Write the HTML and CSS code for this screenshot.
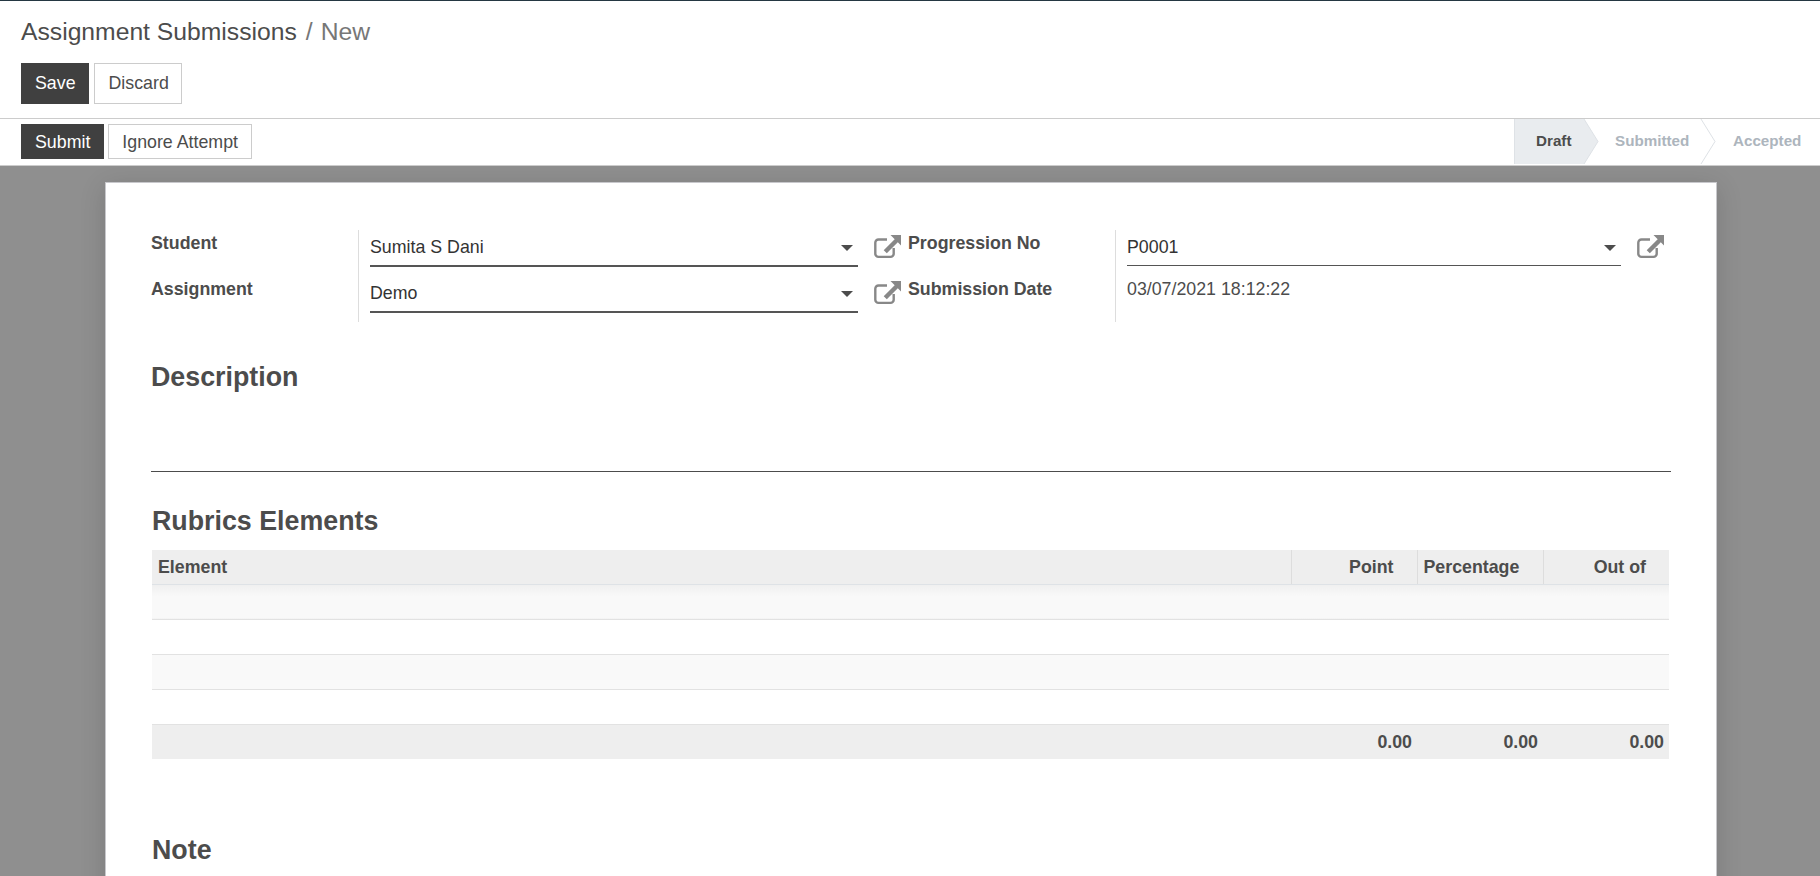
FILE: index.html
```html
<!DOCTYPE html>
<html lang="en">
<head>
<meta charset="utf-8">
<title>Assignment Submissions</title>
<link rel="stylesheet" href="styles.css">
</head>
<body>
<header class="control">
  <div class="crumbs"><span>Assignment Submissions</span><span class="sep">/</span><span class="cur">New</span></div>
  <div class="actions"><button class="btn primary big">Save</button><button class="btn big">Discard</button></div>
</header>
<div class="statusbar">
  <div class="sb-buttons"><button class="btn primary">Submit</button><button class="btn">Ignore Attempt</button></div>
  <div class="steps">
    <div class="step active">Draft<svg class="chev" width="16" height="45" viewBox="0 0 16 45"><path d="M0 0L14 22.500L0 45" fill="#e9ecef" stroke="#dee2e6"/></svg></div>
    <div class="step mid">Submitted<svg class="chev" width="16" height="45" viewBox="0 0 16 45"><path d="M0 0L14 22.500L0 45" fill="#fff" stroke="#dee2e6"/></svg></div>
    <div class="step last">Accepted</div>
  </div>
</div>
<main class="bg">
  <section class="sheet">
    <div class="group">
      <div class="col left">
        <div class="row"><label class="lbl">Student</label><div class="cell"><div class="field"><span>Sumita S Dani</span><i class="caret"></i></div><svg class="ext" viewBox="0 0 27 24"><path d="M13 4.500H4.500a3.200 3.200 0 0 0-3.200 3.200v11a3.200 3.200 0 0 0 3.200 3.200h12a3.200 3.200 0 0 0 3.200-3.200v-5.700" fill="none" stroke="#888" stroke-width="2.400"/><path d="M16.500 0H27V10.500L23.800 7.300 12.800 18.300 9.700 15.200 20.700 4.200Z" fill="#888"/></svg></div></div>
        <div class="row"><label class="lbl">Assignment</label><div class="cell"><div class="field"><span>Demo</span><i class="caret"></i></div><svg class="ext" viewBox="0 0 27 24"><path d="M13 4.500H4.500a3.200 3.200 0 0 0-3.200 3.200v11a3.200 3.200 0 0 0 3.200 3.200h12a3.200 3.200 0 0 0 3.200-3.200v-5.700" fill="none" stroke="#888" stroke-width="2.400"/><path d="M16.500 0H27V10.500L23.800 7.300 12.800 18.300 9.700 15.200 20.700 4.200Z" fill="#888"/></svg></div></div>
      </div>
      <div class="col right">
        <div class="row"><label class="lbl">Progression No</label><div class="cell"><div class="field thin"><span>P0001</span><i class="caret"></i></div><svg class="ext" viewBox="0 0 27 24"><path d="M13 4.500H4.500a3.200 3.200 0 0 0-3.200 3.200v11a3.200 3.200 0 0 0 3.200 3.200h12a3.200 3.200 0 0 0 3.200-3.200v-5.700" fill="none" stroke="#888" stroke-width="2.400"/><path d="M16.500 0H27V10.500L23.800 7.300 12.800 18.300 9.700 15.200 20.700 4.200Z" fill="#888"/></svg></div></div>
        <div class="row"><label class="lbl">Submission Date</label><div class="cell"><span class="plain">03/07/2021 18:12:22</span></div></div>
      </div>
    </div>
    <h2 class="desc">Description</h2>
    <div class="rule"></div>
    <h2 class="rub">Rubrics Elements</h2>
    <table class="tbl">
      <thead><tr><th class="c1">Element</th><th class="c2 r">Point</th><th class="c3">Percentage</th><th class="c4 r">Out of</th></tr></thead>
      <tbody>
        <tr class="odd first"><td></td><td></td><td></td><td></td></tr>
        <tr><td></td><td></td><td></td><td></td></tr>
        <tr class="odd"><td></td><td></td><td></td><td></td></tr>
        <tr><td></td><td></td><td></td><td></td></tr>
      </tbody>
      <tfoot><tr><td></td><td>0.00</td><td>0.00</td><td>0.00</td></tr></tfoot>
    </table>
    <h2 class="note">Note</h2>
  </section>
</main>
</body>
</html>
```
FILE: styles.css
```css
* { box-sizing: border-box; }
html, body { margin: 0; height: 876px; overflow: hidden; }
body { font-family: "Liberation Sans", Arial, sans-serif; font-size: 17.8px; color: #4c4c4c; background: #fff; display: flex; flex-direction: column; }
.control { border-top: 1px solid #243742; height: 119px; border-bottom: 1px solid #ccc; padding: 0 21px; flex: none; }
.crumbs { display: flex; gap: 9px; font-size: 24.7px; line-height: 28px; padding-top: 17px; color: #4c4c4c; }
.sep { color: #777; }
.cur { color: #777; margin-left: -1px; }
.actions { display: flex; gap: 5px; margin-top: 17px; }
.btn { font: inherit; font-size: 17.8px; color: #4c4c4c; background: #fff; border: 1px solid #ccc; padding: 0 13px; height: 35px; line-height: 1; border-radius: 0; }
.btn.big { height: 41px; padding: 0 12px 0 14px; }
.btn.big.primary { padding: 0 12px 0 13px; }
.btn.primary { background: #404040; border-color: #404040; color: #fff; }
.statusbar { display: flex; justify-content: space-between; height: 47px; flex: none; border-bottom: 1px solid #ccc; padding-left: 21px; background: #fff; }
.sb-buttons { display: flex; gap: 4px; padding-top: 5px; }
.sb-buttons .btn { padding-top: 2px; }
.steps { display: flex; height: 45px; }
.step { position: relative; font-size: 15.2px; font-weight: 700; color: #adb5bd; display: flex; align-items: center; padding-bottom: 2px; }
.step.active { width: 70px; background: #e9ecef; color: #4c4c4c; padding-left: 21px; border-left: 1px solid #dee2e6; }
.step.mid { width: 117px; padding-left: 31px; }
.step.last { width: 119px; padding-left: 32px; }
.chev { position: absolute; left: 100%; top: 0; z-index: 1; overflow: visible; }
.bg { flex: 1; min-height: 0; overflow: hidden; background: #8f8f8f; padding-top: 16px; }
.sheet { width: 1612px; margin-left: 105px; height: 800px; background: #fff; border: 1px solid #c8c8cc; box-shadow: 0 5px 25px 0 rgba(0,0,0,.14); padding: 0 45px; }
.group { display: flex; padding-top: 47px; }
.col { display: flex; flex-direction: column; height: 92px; }
.col.left { width: 757px; }
.col.right { width: 760px; }
.row { display: flex; height: 46px; }
.lbl { font-weight: 700; color: #4c4c4c; padding-top: 3px; line-height: 20px; width: 207px; }
.cell { flex: 1; display: flex; border-left: 1px solid #ddd; padding-left: 11px; align-items: flex-start; }
.field { height: 37px; width: 488px; border-bottom: 2px solid #555; display: flex; justify-content: space-between; align-items: center; color: #333; padding-right: 5px; }
.field.thin { width: 494px; height: 36px; border-bottom-width: 1px; }
.caret { width: 0; height: 0; border: 6px solid transparent; border-top-color: #4c4c4c; border-bottom: 0; }
.ext { width: 27px; height: 24px; margin-left: 16px; margin-top: 5px; flex: none; }
.plain { line-height: 20px; padding-top: 3px; }
h2 { margin: 0; font-size: 26.8px; line-height: 30px; font-weight: 700; color: #4c4c4c; }
.desc { margin-top: 40px; }
.rule { height: 1px; background: #4c4c4c; margin-top: 79px; width: 1520px; }
.rub { margin-top: 34px; margin-left: 1px; }
.tbl { border-collapse: collapse; table-layout: fixed; width: 1517px; margin: 14px 0 0 1px; }
.tbl th { height: 34px; background: #eee; font-size: 17.8px; font-weight: 700; text-align: left; padding: 2px 6px 0; border-left: 1px solid #ddd; border-bottom: 1px solid #dee2e6; }
.tbl th.c1 { border-left: 0; }
.tbl th.r { text-align: right; padding-right: 23px; }
.c1 { width: 1139px; }
.c2, .c3, .c4 { width: 126px; }
.tbl tbody td { height: 35px; border-bottom: 1px solid #e2e2e2; }
.tbl .odd td { background: #f9f9f9; }
.tbl .first td { background: linear-gradient(#efefef, #f9f9f9 12px); }
.tbl tfoot td { height: 35px; background: #eee; font-weight: 700; text-align: right; padding: 2px 5px 0; }
.note { margin-top: 76px; margin-left: 1px; }
```
